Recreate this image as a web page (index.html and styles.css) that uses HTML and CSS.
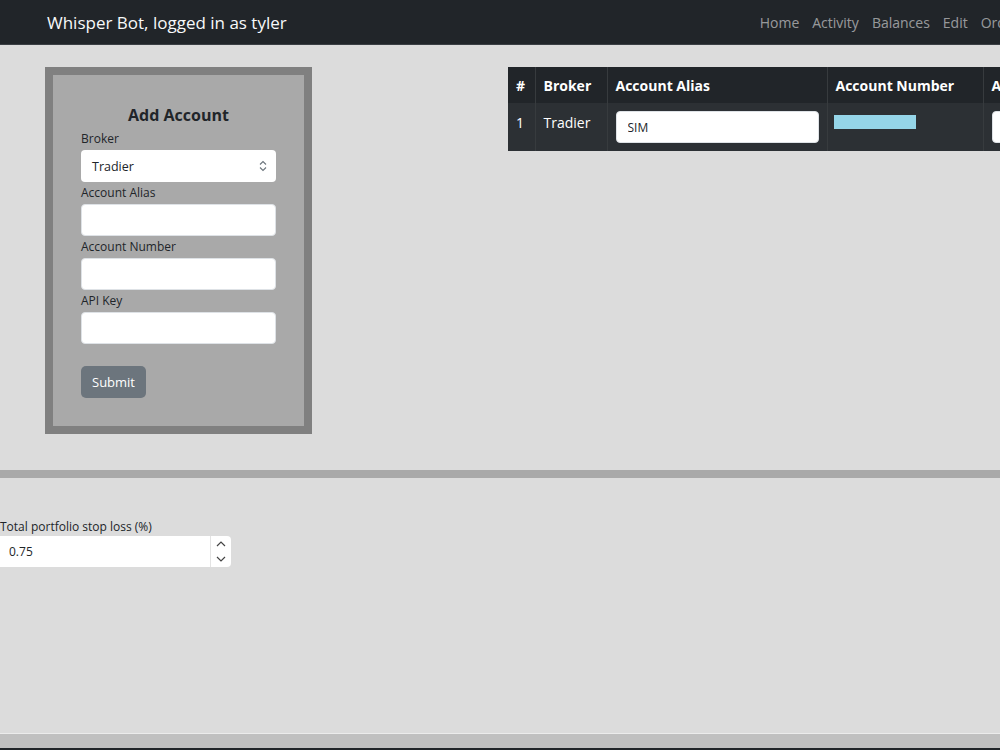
FILE: index.html
```html
<!DOCTYPE html>
<html lang="en">
<head>
    <meta charset="UTF-8">
    <meta name="viewport" content="width=device-width, initial-scale=1.0">
    <title>Whisper Bot</title>
    <link rel="stylesheet" href="styles.css">
</head>
<body>
    <nav class="navbar">
        <span class="brand">Whisper Bot, logged in as tyler</span>
        <ul class="nav-links">
            <li><a href="#">Home</a></li>
            <li><a href="#">Activity</a></li>
            <li><a href="#">Balances</a></li>
            <li><a href="#">Edit</a></li>
            <li><a href="#">Orders</a></li>
            <li><a href="#">Logout</a></li>
        </ul>
    </nav>

    <section class="accounts">
        <form class="add-card" id="addAccount">
            <h4>Add Account</h4>
            <label for="broker">Broker</label>
            <div class="select-box">
                <span>Tradier</span>
                <svg width="8" height="12" viewBox="0 0 8 12"><path d="M1 4.5 4 1.5 7 4.5M1 7.5 4 10.5 7 7.5" fill="none" stroke="#6c757d" stroke-width="1.1"/></svg>
            </div>

            <label for="alias">Account Alias</label>
            <input type="text" id="alias" class="field">

            <label for="number">Account Number</label>
            <input type="text" id="number" class="field">

            <label for="apikey">API Key</label>
            <input type="text" id="apikey" class="field">

            <button type="submit" class="btn-submit">Submit</button>
        </form>

        <table class="acct-table">
            <thead>
                <tr>
                    <th class="c-num">#</th>
                    <th class="c-broker">Broker</th>
                    <th class="c-alias">Account Alias</th>
                    <th class="c-acct">Account Number</th>
                    <th class="c-key">API Key</th>
                </tr>
            </thead>
            <tbody>
                <tr>
                    <td>1</td>
                    <td>Tradier</td>
                    <td><input type="text" class="field" value="SIM"></td>
                    <td><span class="hidden-num"></span></td>
                    <td><input type="text" class="field"></td>
                </tr>
            </tbody>
        </table>
    </section>

    <div class="divider"></div>

    <section class="settings">
        <label for="stoploss">Total portfolio stop loss (%)</label>
        <div class="number-box">
            <span class="number-val">0.75</span>
            <div class="spinner">
                <svg width="10" height="6" viewBox="0 0 10 6"><path d="M1 5 5 1 9 5" fill="none" stroke="#444" stroke-width="1.2"/></svg>
                <svg width="10" height="6" viewBox="0 0 10 6"><path d="M1 1 5 5 9 1" fill="none" stroke="#444" stroke-width="1.2"/></svg>
            </div>
        </div>
    </section>

    <footer class="footer"></footer>
</body>
</html>
```

FILE: styles.css
```css
body {
    margin: 0;
    font-family: "Open Sans", "Noto Sans", sans-serif;
    background-color: #dcdcdc;
    color: #212529;
    overflow-x: hidden;
    width: 1000px;
}
.navbar {
    display: flex;
    align-items: center;
    justify-content: space-between;
    height: 44px;
    background-color: #212529;
    border-bottom: 1px solid #3b3f44;
    padding-left: 47px;
    white-space: nowrap;
}
.brand {
    color: #f8f9fa;
    font-size: 17px;
}
.nav-links {
    display: flex;
    list-style: none;
    margin: 0;
    padding: 0;
    margin-right: -91px;
}
.nav-links a {
    display: block;
    padding: 0 6.5px;
    color: rgba(255,255,255,0.55);
    text-decoration: none;
    font-size: 14px;
}
.accounts {
    display: flex;
    align-items: flex-start;
    gap: 196px;
    padding: 22px 0 36px 45px;
}
.add-card {
    flex: none;
    width: 195px;
    padding: 28px;
    background: #a9a9a9;
    border: 8px solid #808080;
    display: flex;
    flex-direction: column;
}
.add-card h4 {
    margin: 0 0 4px;
    padding-top: 2px;
    font-size: 16px;
    line-height: 20px;
    font-weight: 700;
    text-align: center;
}
.add-card label {
    font-size: 12px;
    line-height: 18px;
    margin: 2px 0 2px;
}
.add-card label:first-of-type {
    margin-top: 1px;
}
.field {
    box-sizing: border-box;
    width: 100%;
    height: 32px;
    padding: 0 11px;
    border: 1px solid #dee2e6;
    border-radius: 4px;
    background: #fff;
    font-family: inherit;
    font-size: 12px;
    color: #212529;
}
.select-box {
    box-sizing: border-box;
    height: 32px;
    display: flex;
    align-items: center;
    justify-content: space-between;
    padding: 0 9px 0 11px;
    background: #fff;
    border-radius: 4px;
    font-size: 12.5px;
}
.btn-submit {
    align-self: flex-start;
    margin-top: 22px;
    height: 32px;
    padding: 0 11px;
    border: none;
    border-radius: 5px;
    background: #6c757d;
    color: #fff;
    font-family: inherit;
    font-size: 13px;
}
.acct-table {
    flex: none;
    border-collapse: collapse;
    background: #2c3034;
    color: #fff;
    font-size: 14px;
}
.acct-table th {
    background: #212529;
    height: 36px;
    padding: 0 8px;
    text-align: left;
    font-weight: 700;
    box-sizing: border-box;
}
.acct-table th, .acct-table td {
    border-right: 1px solid #373b3e;
}
.acct-table td {
    padding: 8px;
    vertical-align: top;
    line-height: 24px;
}
.c-num { width: 27px; }
.c-broker { width: 72px; }
.c-alias { width: 220px; }
.c-acct { width: 156px; }
.c-key { width: 220px; }
.hidden-num {
    display: inline-block;
    width: 82px;
    height: 14px;
    margin: 4px 0 0 -2px;
    background: #95d5e8;
    vertical-align: top;
}
.divider {
    height: 8px;
    background: #a9a9a9;
}
.settings {
    height: 255px;
    box-sizing: border-box;
    padding-top: 40px;
}
.settings label {
    display: block;
    font-size: 12px;
    line-height: 18px;
}
.number-box {
    display: flex;
    width: 231px;
    height: 31px;
    background: #fff;
    border-radius: 0 4px 4px 0;
}
.number-val {
    flex: 1;
    padding-left: 9px;
    font-size: 12px;
    line-height: 31px;
}
.spinner {
    width: 20px;
    display: flex;
    flex-direction: column;
    align-items: center;
    justify-content: space-around;
    border-left: 1px solid #e3e3e3;
}
.footer {
    height: 14px;
    border-top: 1px solid #ececec;
    border-bottom: 3px solid #212529;
    background: #c0c0c0;
}
```
